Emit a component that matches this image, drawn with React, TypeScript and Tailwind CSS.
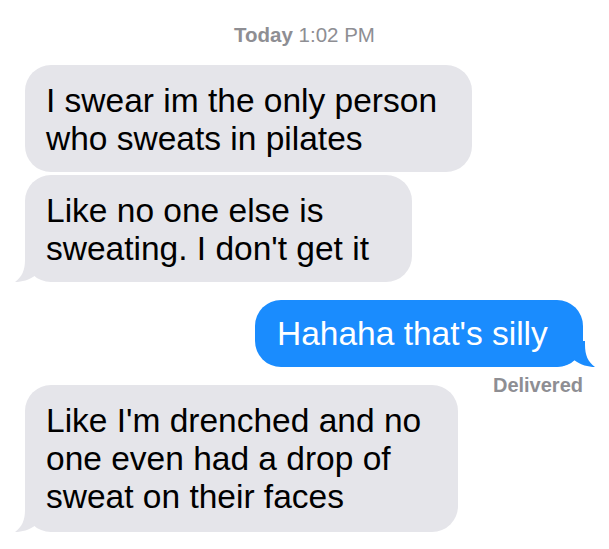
const GRAY = '#e5e5ea'
const BLUE = '#1a8cfe'

function Tail({ side, color }: { side: 'left' | 'right'; color: string }) {
  if (side === 'left') {
    return (
      <svg className="absolute bottom-0 -left-[10px]" width="44" height="26" viewBox="0 0 44 26">
        <path d="M10 0 L10 4 C10 14 7 21 0 26 C7 26 14 24 21 19 C27 24 34 26 44 26 L44 0 Z" fill={color} />
      </svg>
    )
  }
  return (
    <svg className="absolute bottom-0 -right-[12px]" width="44" height="26" viewBox="0 0 44 26">
      <path d="M34 0 L34 4 C34 14 37 21 44 26 C37 26 30 24 23 19 C17 24 10 26 0 26 L0 0 Z" fill={color} />
    </svg>
  )
}

function Received({ lines, width, tail, pb = 'pb-[14px]' }: { lines: string[]; width: string; tail?: boolean; pb?: string }) {
  return (
    <div className={`relative ${width} rounded-[26px] bg-[#e5e5ea] pl-[21px] pt-[17px] ${pb} text-[33.5px] leading-[38px] text-black`}>
      {tail && <Tail side="left" color={GRAY} />}
      <div className="relative">
        {lines.map((l) => (
          <div key={l} className="whitespace-nowrap">{l}</div>
        ))}
      </div>
    </div>
  )
}

export default function App() {
  return (
    <div className="w-[609px] h-[549px] bg-white overflow-hidden font-['Liberation_Sans',Arial,sans-serif] pt-[22px]">
      {/* timestamp */}
      <div className="text-center text-[20.5px] leading-[25px] text-[#8e8e93]">
        <span className="font-bold">Today</span> 1:02 PM
      </div>

      <div className="flex flex-col pl-[25px] pr-[26px] mt-[18px]">
        <Received lines={['I swear im the only person', 'who sweats in pilates']} width="w-[447px]" />
        <div className="mt-[3px]">
          <Received lines={['Like no one else is', "sweating. I don't get it"]} width="w-[387px]" tail />
        </div>

        {/* sent */}
        <div className="flex justify-end mt-[18px]">
          <div className="relative w-[328px] rounded-[26px] bg-[#1a8cfe] pl-[22px] pt-[15px] pb-[14px] text-[33.5px] leading-[38px] text-white whitespace-nowrap">
            <Tail side="right" color={BLUE} />
            <span className="relative">Hahaha that's silly</span>
          </div>
        </div>
        <div className="mt-[6px] text-right text-[20px] leading-[24px] font-bold text-[#8e8e93]">Delivered</div>

        <div className="-mt-[12px]">
          <Received
            lines={["Like I'm drenched and no", 'one even had a drop of', 'sweat on their faces']}
            width="w-[433px]"
            pb="pb-[16px]"
            tail
          />
        </div>
      </div>
    </div>
  )
}
